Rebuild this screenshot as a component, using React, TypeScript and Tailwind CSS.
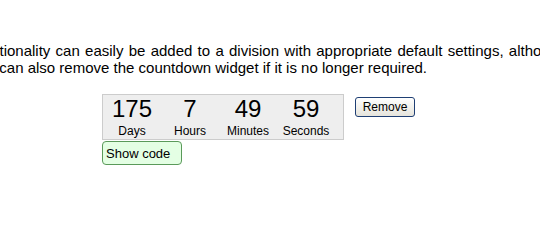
const units = [
  { amount: 175, label: "Days" },
  { amount: 7, label: "Hours" },
  { amount: 49, label: "Minutes" },
  { amount: 59, label: "Seconds" },
];

function Countdown() {
  return (
    <div className="flex h-[46px] w-[242px] border border-[#cccccc] bg-[#eeeeee]">
      {units.map((u) => (
        <div key={u.label} className="flex w-[58px] flex-col items-center">
          <span className="text-[24px] leading-[28px]">{u.amount}</span>
          <span className="mt-px text-[12px] leading-[14px]">{u.label}</span>
        </div>
      ))}
    </div>
  );
}

export default function App() {
  return (
    <div className="h-[227px] w-full overflow-hidden bg-white font-['Liberation_Sans',Arial,sans-serif] text-black">
      {/* justified paragraph: first line has wider word gaps */}
      <div className="mt-[42px] whitespace-nowrap text-[15px] leading-[17px]">
        <p className="ml-[-137.8px] [word-spacing:1.1px]">
          The countdown functionality can easily be added to a division with appropriate default settings, although they can be overridden if
        </p>
        <p className="ml-[-105.5px]">
          necessary. You can also remove the countdown widget if it is no longer required.
        </p>
      </div>
      <div className="ml-[102px] mt-[18px] flex items-start">
        <Countdown />
        <button className="ml-[11px] mt-[3px] h-[20px] w-[60px] rounded-[3px] border border-[#1f3f74] bg-linear-to-b from-white to-[#e6e4dc] text-[12px] leading-none">
          Remove
        </button>
      </div>
      <button className="ml-[102px] mt-px h-[24px] w-[80px] rounded-[4px] border border-[#5a9a5a] bg-[#e4ffe4] pl-[3px] text-left text-[13px] leading-none">
        Show code
      </button>
    </div>
  );
}
